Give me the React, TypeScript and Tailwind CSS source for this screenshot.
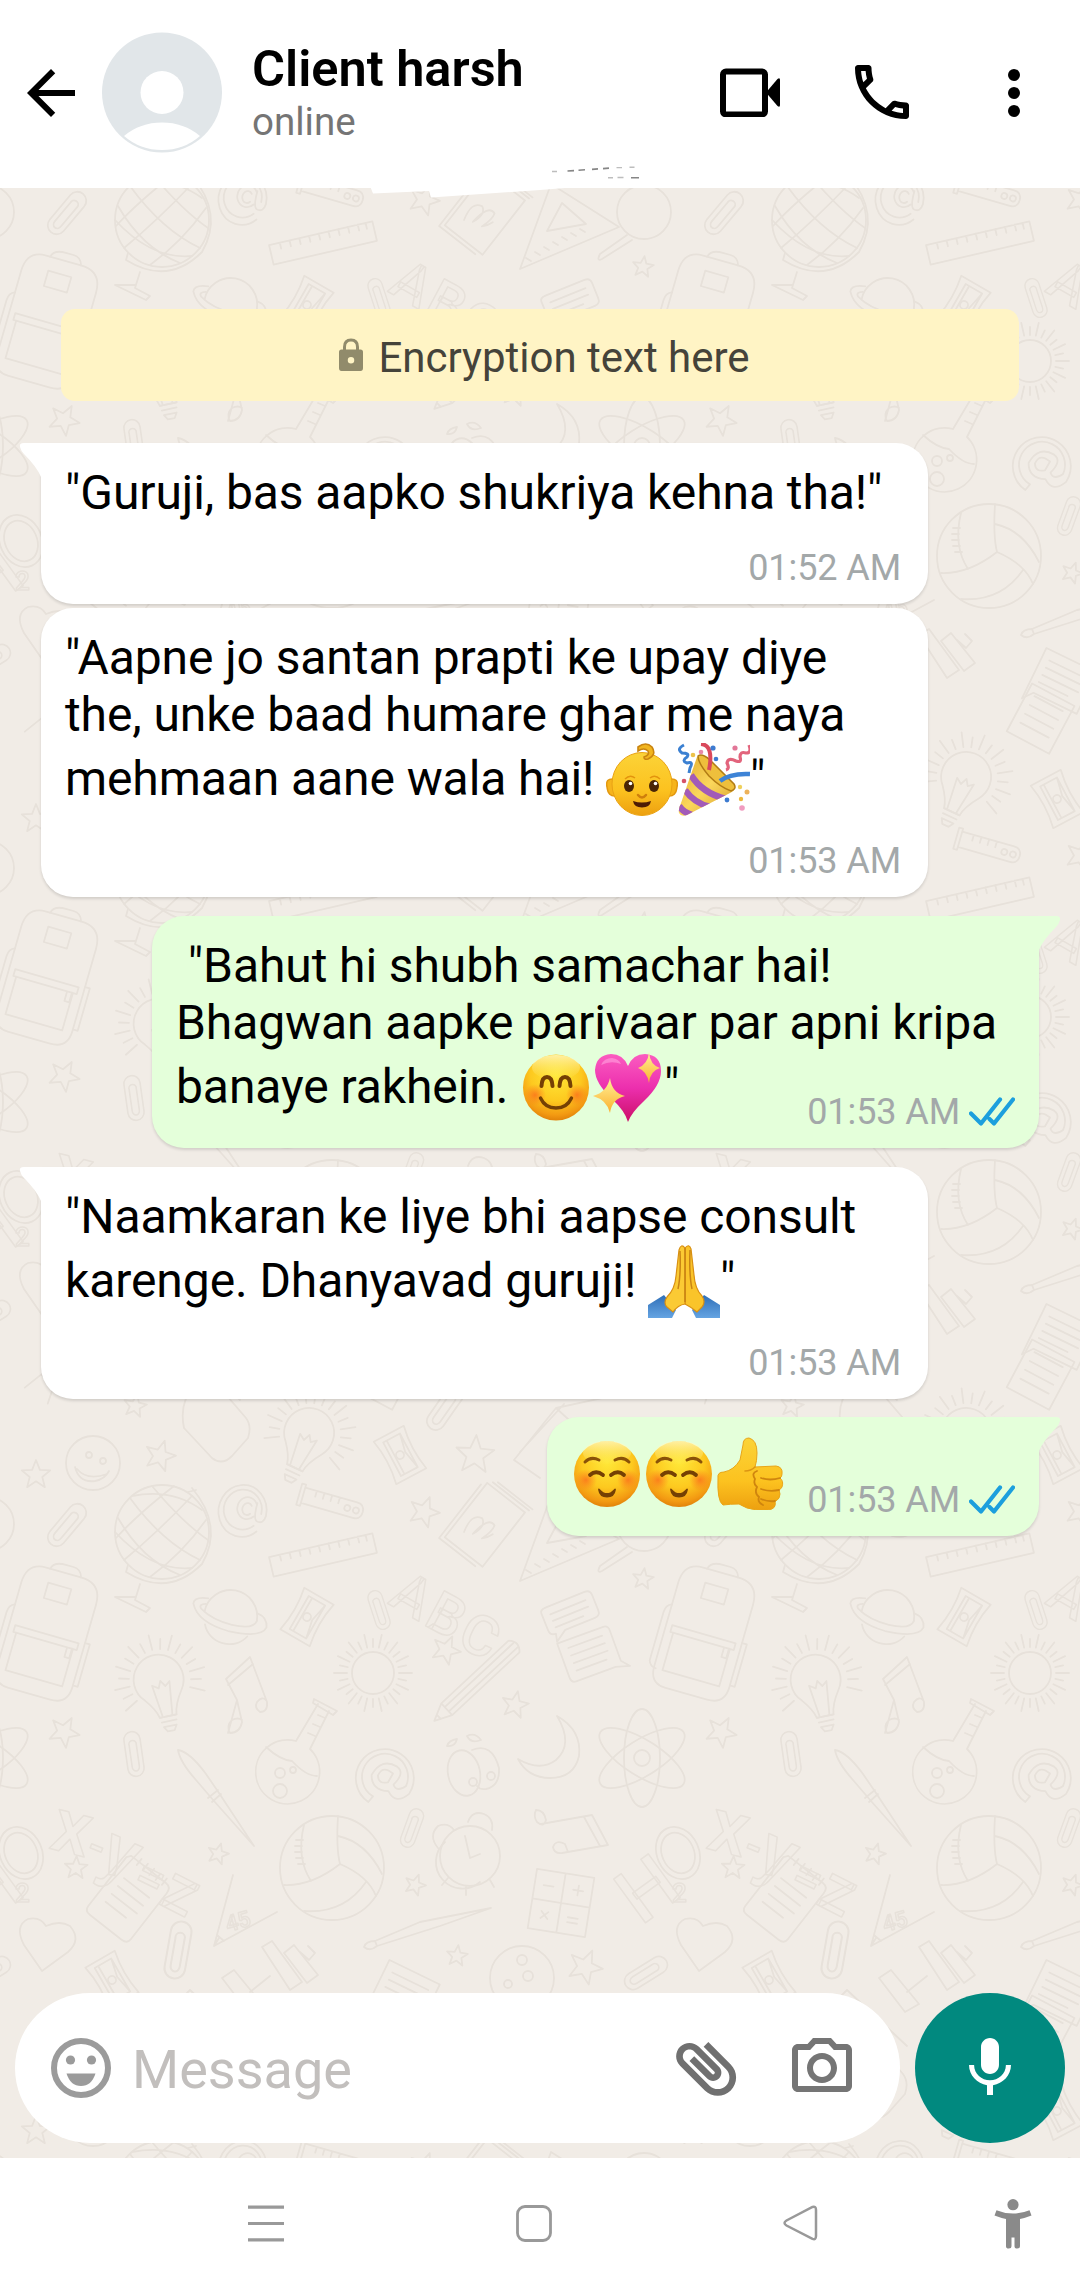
import React from "react";

/* ---------- Wallpaper ---------- */

const stars: [number, number, number][] = [
  [36, 75, 15], [160, 56, 16], [475, 55, 20], [424, 112, 16], [643, 179, 11], [446, 250, 15],
  [515, 305, 14], [64, 332, 16], [218, 454, 11], [76, 468, 12], [415, 485, 11], [457, 556, 11],
  [585, 567, 18], [135, 6, 12],
];

const STAR = "M0 -1L.26 -.34L.95 -.31L.42 .13L.59 .81L0 .42L-.59 .81L-.42 .13L-.95 -.31L-.26 -.34Z";

const clips: [number, number, number, number][] = [
  [67, 125, 40, 1], [379, 210, -18, 0.8], [134, 354, -8, 0.9], [412, 428, 20, 0.8],
  [178, 550, 10, 1.15], [445, 8, 35, 1], [646, 573, 58, 0.95],
];

function Rays({ r1, r2, n, from = 0, to = 360 }: { r1: number; r2: number; n: number; from?: number; to?: number }) {
  const rays = [];
  for (let i = 0; i < n; i++) {
    const a = ((from + ((to - from) * i) / n) * Math.PI) / 180;
    const end = i % 2 ? r2 - 5 : r2;
    rays.push(
      <path key={i} d={`M${(Math.cos(a) * r1).toFixed(1)} ${(Math.sin(a) * r1).toFixed(1)}L${(Math.cos(a) * end).toFixed(1)} ${(Math.sin(a) * end).toFixed(1)}`} />
    );
  }
  return <>{rays}</>;
}

function Bulb() {
  return (
    <>
      <path d="M-8 37Q-10 28 -19 17A25 25 0 1 1 19 14Q10 27 9 37Z" />
      <path d="M-5 36L-9 4L-3 8L0 1L4 7L9 3L5 36M-8 37h17M-7 42h15M-6 47h13l-3 5h-7z" />
      <Rays r1={31} r2={46} n={17} from={150} to={400} />
    </>
  );
}

function Sharpener() {
  return (
    <>
      <path d="M-17 -24H17Q12 0 17 24H-17Q-12 0 -17 -24Z" />
      <path d="M-9 -19H10V19H-9ZM-5 -19V19M10 -19L6 0L10 19" />
      <circle r="4" />
    </>
  );
}

function Tile() {
  return (
    <g id="doodles">
      {stars.map(([x, y, r], i) => (
        <path key={i} d={STAR} transform={`translate(${x} ${y}) rotate(${(i * 17) % 30}) scale(${r})`} vectorEffect="non-scaling-stroke" />
      ))}
      {clips.map(([x, y, a, s], i) => (
        <g key={i} transform={`translate(${x} ${y}) rotate(${a}) scale(${s})`}>
          <path d="M9 -12V16A9 9 0 0 1 -9 16V-16A9 9 0 0 1 9 -16V-10M4 -12V14A4 5 0 0 1 -4 14V-10A4 4 0 0 1 4 -12" />
        </g>
      ))}
      <g transform="translate(93 63)">
        <circle r="27" /><circle cx="-4" cy="-8" r="3" /><circle cx="10" cy="-2" r="3" />
        <path d="M-18 4Q-14 20 2 18Q12 16 16 8M-16 6Q-6 18 14 11" />
      </g>
      <path d="M188 -5Q180 8 184 28L212 58Q222 66 232 56L248 38Q252 26 246 18L222 -10" />
      <g transform="translate(310 34) rotate(25)"><Bulb /></g>
      <g transform="translate(160 280) rotate(-12)"><Bulb /></g>
      <g transform="translate(400 55) rotate(-28)"><Sharpener /></g>
      <g transform="translate(307 217) rotate(30)"><Sharpener /></g>
      <g transform="translate(112 580) rotate(-30)"><Sharpener /></g>
      <g transform="translate(162 132)">
        <circle r="47" />
        <path d="M-32 -34Q0 10 38 28M-44 -14Q-20 28 18 43M-10 -46Q20 -10 46 8M30 -36Q-4 0 -38 28M44 -12Q20 22 -12 45M12 -46Q-24 -18 -46 6M-47 0Q-10 40 30 36M-30 -36Q10 -44 40 -22" />
        <path d="M30 -44Q62 -6 40 32Q6 66 -36 40M26 -40L34 -42M-36 40L-34 33M-22 52L-27 68L-12 76L-16 80L-47 65L-27 65" />
      </g>
      <g transform="translate(247 109) rotate(12)">
        <path d="M14 20A24 26 0 1 1 20 3Q19 12 12 10Q8 8 9 -8M10 15A19 20 0 1 1 15 2M9 -6A10 11 0 1 0 8 6M4 -4A5 6 0 1 0 4 4" />
      </g>
      <g transform="translate(386 377) rotate(24)">
        <path d="M-6 30A29 29 0 1 1 28 6Q20 22 8 12Q-8 18 -14 4Q-12 -16 6 -14Q16 -12 10 4Q16 10 22 0A23 23 0 1 0 -4 23ZM5 -6Q-8 -10 -8 2Q-4 10 4 4Z" />
      </g>
      <g transform="translate(330 103) rotate(16)">
        <path d="M-32 -11V11M-28 -8H26Q34 -8 34 0T26 8H-28ZM-32 -11h4V11h-4M-16 -8v6M-8 -8v6M0 -8v6M8 -8v6" /><circle cx="18" r="3" /><circle cx="27" r="3" />
      </g>
      <g transform="translate(323 155) rotate(-13)">
        <path d="M-53 -10H53V10H-53ZM-42 -10v6M-32 -10v6M-22 -10v6M-12 -10v6M-2 -10v6M8 -10v6M18 -10v6M28 -10v6M38 -10v6M46 -10v6" />
      </g>
      <g transform="translate(483 124) rotate(38)">
        <path d="M-22 -35H26V34H-22ZM-26 -30V38H20M-18 -39H28M-14 -42H30M-10 18Q-16 -2 -4 -4Q4 0 -2 14Q0 -10 10 -6Q12 0 8 12Q12 8 14 2" />
      </g>
      <path d="M520 181L551 96L619 139ZM547 143L562 115L586 136ZM526 170l5 3M535 164l5 3M544 159l5 3M553 154l5 3M562 149l5 3M571 145l5 3M580 141l5 3" />
      <path d="M514 60L556 8L640 -10M514 60L540 78M520 52L564 4M556 8L580 30" />
      <circle cx="644" cy="124" r="27" />
      <path d="M627 147L600 166Q596 174 602 171L632 152" />
      <g transform="translate(46 234) rotate(16)">
        <path d="M-38 -42Q-38 -64 -18 -64H18Q40 -64 40 -42V44Q40 62 22 62H-22Q-38 62 -38 44Z" />
        <path d="M-14 -64Q-12 -72 0 -72H8Q16 -72 18 -64M-12 -50h24v16h-24zM-32 0H34V7H-32ZM-29 7V46H30V7M24 7v10h5v-10M-38 -20q-6 2 -6 10V40q2 6 8 6M40 -2h5V42h-5" />
      </g>
      <g transform="translate(230 217) rotate(16)">
        <path d="M-26 2A26 26 0 1 1 27 -3M-22 14A24 22 0 0 0 22 14M-26 -12Q-40 -10 -39 -3Q-30 14 2 14Q36 12 38 0Q36 -10 26 -11M-27 -6Q-34 -4 -30 0Q-16 8 4 7Q26 6 27 -4" />
      </g>
      <g fill="none" fontFamily="Roboto, sans-serif" fontWeight="500" strokeWidth="1.5">
        <text transform="translate(387 203) rotate(30)" fontSize="56">A</text>
        <text transform="translate(422 224) rotate(28)" fontSize="56">B</text>
        <text transform="translate(455 245) rotate(26)" fontSize="56">C</text>
        <text transform="translate(48 448) rotate(14)" fontSize="76">x</text>
        <text transform="translate(84 458) rotate(22)" fontSize="46">-</text>
        <text transform="translate(96 468) rotate(24)" fontSize="72">y</text>
        <text transform="translate(131 486) rotate(26)" fontSize="50">=</text>
        <text transform="translate(157 503) rotate(27)" fontSize="66">z</text>
        <text transform="translate(-16 526) rotate(-36)" fontSize="76">H</text>
        <text transform="translate(15 502)" fontSize="26">2</text>
        <text transform="translate(228 532) rotate(-16)" fontSize="22">45</text>
      </g>
      <g transform="translate(21 453) rotate(-24)"><ellipse rx="21" ry="27" /><ellipse rx="16" ry="21" /></g>
      <path d="M228 333L237 300L226 279L250 257L267 302Q268 312 260 312Q254 308 257 302Q262 296 266 300M228 285L253 264M237 300L242 322Q240 333 230 333Q226 326 232 320Q238 317 242 320" />
      <path d="M541 424L592 415L608 445L562 453Q554 454 553 447Q556 439 565 444L568 452M536 410Q544 410 546 420Q544 428 537 422Q533 416 536 410M584 417L600 446" />
      <g transform="translate(373 273)"><circle r="21" /><Rays r1={26} r2={39} n={28} /></g>
      <g transform="translate(476 282) rotate(47)">
        <path d="M-8 -52Q0 -60 8 -52V40L0 57L-8 40ZM-3 -54V40M3 -54V40M-8 40H8M-3 51H3" />
      </g>
      <g transform="translate(570 215) rotate(-22)">
        <path d="M-26 -12Q-26 -16 -20 -16H22Q28 -16 28 -10V6Q28 12 22 12H-10L-22 20L-20 12Q-26 12 -26 6ZM-18 -8H20M-18 -1H20M-18 6H12" />
      </g>
      <g transform="translate(590 255) rotate(-20)">
        <path d="M-27 -22H22Q27 -22 27 -16V16L34 24L20 20H-22Q-27 20 -27 14ZM-18 -14H18M-18 -6H18M-18 2H18M-18 10H14" />
      </g>
      <path d="M296 341A32 32 0 1 0 310 349L329 311M296 341L318 304M314 299L337 311L333 315L313 303ZM266 347Q280 360 292 361Q306 376 317 376M318 315l7 3M313 324l7 3M308 333l7 3" />
      <circle cx="280" cy="373" r="5" /><circle cx="280" cy="391" r="7" /><circle cx="293" cy="370" r="3" />
      <path d="M178 350Q190 352 206 374L219 393L254 446L214 401L196 380Q180 362 178 350ZM208 398L218 390M212 402L221 394" />
      <ellipse cx="464" cy="373" rx="16" ry="23" transform="rotate(-12 464 373)" />
      <path d="M472 350Q492 342 499 368Q500 386 486 389Q480 390 477 386M447 346q2 -6 10 -7q-2 8 -10 7M467 336q8 -4 14 4q-10 4 -14 -4" />
      <circle cx="473" cy="382" r="4" /><circle cx="491" cy="376" r="4" />
      <path d="M557 316Q582 330 579 356Q574 378 550 378Q528 378 518 359Q540 372 556 360Q574 344 557 316Z" />
      <g transform="translate(642 358)">
        <ellipse rx="18" ry="49" /><ellipse rx="18" ry="49" transform="rotate(58)" /><ellipse rx="18" ry="49" transform="rotate(-58)" /><circle r="8" />
      </g>
      <g transform="translate(128 499) rotate(38)">
        <path d="M-24 -36H20Q27 -36 27 -28V30Q27 36 20 36H-20Q-27 36 -27 30V-32ZM-16 -14H16M-16 -4H16M-16 6H16M-16 16H10M-14 -40v8M-6 -40v8M2 -40v8M10 -40v8M18 -40v8" />
      </g>
      <path d="M233 475L214 546L277 512M214 546L219 538M217 535L224 541" />
      <g transform="translate(332 468)">
        <circle r="52" />
        <path d="M6 -52Q4 -20 8 -4Q-20 18 -48 17M8 -4Q36 8 44 28M6 -32Q34 -26 50 6M-28 -43Q-36 -10 -21 13M34 14Q12 46 -28 43M-36 -28h7M-37 -22h7M-37 -16h7M-36 -10h7M-34 -4h7" />
      </g>
      <g transform="translate(470 456)">
        <circle r="30" /><path d="M-25 -14A25 25 0 0 0 10 26M-5 -20L0 2L10 -2M-32 -8Q-42 -20 -32 -30Q-22 -34 -16 -26M-2 -34Q2 -46 14 -42Q24 -38 22 -26M-22 22l-6 7M20 24l4 7M-4 31v8" />
      </g>
      <g transform="translate(561 503) rotate(9)">
        <path d="M-29 -30H29V30H-29ZM0 -30V30M-29 0H29M-20 -15h10M10 -15h10M15 -20v10M-18 11l7 7M-11 11l-7 7M9 13h10M9 18h10" />
      </g>
      <path d="M364 547Q366 541 375 541L420 522L491 508L440 526L377 546Q370 552 364 547ZM375 541L377 546" />
      <path d="M42 571L24 545Q14 526 28 519Q40 516 46 526Q60 520 70 526Q82 540 68 552Z" />
      <path d="M262 547L272 541L302 582L290 590ZM284 553L294 545L318 575L307 583ZM300 552L309 560L315 553L308 546M222 578L234 570L262 604L248 612ZM250 592L270 576" />
      <g transform="translate(405 592) rotate(26)"><path d="M-28 -22H28V24H-20L-28 34ZM-20 -12H20M-20 -4H20M-20 4H20M-20 12H12" /></g>
      <g transform="translate(385 628) rotate(28)"><path d="M-24 -24H24V30H-24ZM-16 -14H16M-16 -4H16M-16 6H16M-16 16H16" /></g>
      <circle cx="522" cy="578" r="32" /><circle cx="522" cy="560" r="5" /><circle cx="528" cy="576" r="5" /><circle cx="508" cy="584" r="4" />
      <g transform="translate(50 632) rotate(35)"><path d="M-14 24L0 -24L14 24M-7 4H7" /></g>
      <path d="M180 600L240 656M190 590L250 646M180 600L190 590" />
    </g>
  );
}

function Wallpaper() {
  return (
    <svg className="absolute inset-0 h-full w-full" aria-hidden="true">
      <defs>
        <pattern id="wall" width="657" height="656" patternUnits="userSpaceOnUse" patternTransform="translate(0 -100)">
          <g fill="none" stroke="#e7e1da" strokeWidth="1.8" strokeLinecap="round" strokeLinejoin="round">
            <Tile />
            <use href="#doodles" x="657" />
            <use href="#doodles" x="-657" />
            <use href="#doodles" y="-656" />
            <use href="#doodles" y="656" />
          </g>
        </pattern>
      </defs>
      <rect width="100%" height="100%" fill="url(#wall)" />
    </svg>
  );
}

/* ---------- Emoji ---------- */

function EmojiDefs() {
  return (
    <svg className="absolute h-0 w-0" aria-hidden="true">
      <defs>
        <linearGradient id="skin" x1="0" y1="0" x2="0" y2="1">
          <stop offset="0" stopColor="#fbd338" /><stop offset=".6" stopColor="#fcc21f" /><stop offset="1" stopColor="#eda010" />
        </linearGradient>
        <radialGradient id="face" cx=".5" cy=".32" r=".7">
          <stop offset="0" stopColor="#ffe838" /><stop offset=".55" stopColor="#fdc91f" /><stop offset=".85" stopColor="#f39a12" /><stop offset="1" stopColor="#dd7d08" />
        </radialGradient>
        <linearGradient id="gloss" x1="0" y1="0" x2="0" y2="1">
          <stop offset="0" stopColor="#fffbd0" stopOpacity=".75" /><stop offset="1" stopColor="#fff27a" stopOpacity="0" />
        </linearGradient>
        <radialGradient id="blush"><stop offset="0" stopColor="#fb6f1c" stopOpacity=".8" /><stop offset="1" stopColor="#fb7a1c" stopOpacity="0" /></radialGradient>
        <linearGradient id="pink" x1="0" y1="0" x2="0" y2="1">
          <stop offset="0" stopColor="#fb5cc0" /><stop offset=".5" stopColor="#ec2fae" /><stop offset="1" stopColor="#cb0f68" />
        </linearGradient>
        <linearGradient id="spark" x1="0" y1="0" x2="0" y2="1"><stop offset="0" stopColor="#fff29a" /><stop offset="1" stopColor="#fbb02c" /></linearGradient>
        <linearGradient id="cone" x1="0" y1="0" x2="1" y2="1"><stop offset="0" stopColor="#d99f20" /><stop offset=".5" stopColor="#fbd75c" /><stop offset="1" stopColor="#c98a18" /></linearGradient>
        <linearGradient id="sleeve" x1="0" y1="0" x2="0" y2="1"><stop offset="0" stopColor="#2f6fb8" /><stop offset="1" stopColor="#65a4e2" /></linearGradient>
        <clipPath id="coneClip"><path d="M1 70Q0 66 3 60L19 14Q24 10 30 16L56 42Q59 47 52 50L9 72Q3 74 1 70Z" /></clipPath>
      </defs>
    </svg>
  );
}

function Emoji({ children }: { children: React.ReactNode }) {
  return <svg viewBox="0 0 72 73" className="h-[73px] w-[72px] shrink-0">{children}</svg>;
}

const Baby = () => (
  <Emoji>
    <path d="M8 36Q-1 35 1 44Q2 54 10 53M64 36Q73 35 71 44Q70 54 62 53" fill="#f6b41c" stroke="#e3980f" strokeWidth="1.5" />
    <ellipse cx="36" cy="41" rx="30" ry="31.5" fill="url(#skin)" stroke="#eaa314" strokeWidth="1" />
    <path d="M32 4Q40 -2 46 4Q51 12 42 16Q38 17 38 14Q44 12 42 8Q38 4 32 8Z" fill="#f1b51f" stroke="#c98410" strokeWidth="1.6" />
    <path d="M19 36Q24 31 29 35M44 35Q49 31 54 36" fill="none" stroke="#e3940e" strokeWidth="1.5" />
    <ellipse cx="23" cy="43" rx="5" ry="6" fill="#4a2506" /><ellipse cx="48" cy="43" rx="5" ry="6" fill="#4a2506" />
    <circle cx="24.5" cy="40.5" r="1.8" fill="#fff" /><circle cx="49.5" cy="40.5" r="1.8" fill="#fff" />
    <path d="M32 52Q36 57 40 52" fill="none" stroke="#cf7f0c" strokeWidth="2.5" strokeLinecap="round" />
    <path d="M27 58Q36 61 45 58Q44 64.5 36 64.5T27 58Z" fill="#4d1c05" />
  </Emoji>
);

const Party = () => (
  <Emoji>
    <g clipPath="url(#coneClip)">
      <rect width="72" height="73" fill="url(#cone)" />
      <path d="M13 32Q24 50 48 56M7 47Q16 60 32 64M1 63Q6 70 14 72" fill="none" stroke="#a25bb8" strokeWidth="6.5" />
    </g>
    <path d="M20 13Q24 10 32 17L56 41Q59 46 53 48Q42 44 31 33Q20 20 20 13Z" fill="#eebf3c" stroke="#b27c14" strokeWidth="1.5" />
    <path d="M23 1Q36 2 31 27" fill="none" stroke="#d9495c" strokeWidth="4" />
    <path d="M42 38Q52 30 72 31" fill="none" stroke="#3d83d6" strokeWidth="4.5" />
    <path d="M6 2Q-2 6 4 10Q12 10 9 14Q3 18 9 20Q16 18 12 25L11 30" fill="none" stroke="#3b80d2" strokeWidth="3" />
    <path d="M71 2Q74 10 68 10Q62 8 62 14Q64 20 58 18Q50 14 49 20Q52 26 48 27" fill="none" stroke="#e2647c" strokeWidth="3.2" />
    <circle cx="35" cy="5" r="2.6" fill="#3d7bd0" /><circle cx="38" cy="16" r="2.3" fill="#3d7bd0" /><circle cx="57" cy="5" r="2.6" fill="#e27798" />
    <circle cx="15" cy="12" r="2.3" fill="#edc24a" /><circle cx="23" cy="9" r="2.3" fill="#e889a8" /><circle cx="6" cy="38" r="2.3" fill="#d65367" />
    <circle cx="62" cy="44" r="2.2" fill="#efd05c" /><circle cx="69" cy="49" r="2.5" fill="#edb25a" /><circle cx="63" cy="56" r="2.2" fill="#edb83c" />
    <circle cx="49" cy="57" r="2.4" fill="#3d7bd0" /><circle cx="64" cy="65" r="2.8" fill="#f09cc0" />
  </Emoji>
);

const Smile = () => (
  <Emoji>
    <circle cx="36" cy="36.5" r="33" fill="url(#face)" />
    <ellipse cx="36" cy="16.5" rx="24" ry="12.5" fill="url(#gloss)" />
    <circle cx="15" cy="44" r="11" fill="url(#blush)" /><circle cx="57" cy="44" r="11" fill="url(#blush)" />
    <path d="M21.5 35Q22 26 27 26T32.5 35M39.5 35Q40 26 45 26T50.5 35" fill="none" stroke="#754004" strokeWidth="4" strokeLinecap="round" />
    <path d="M20.5 47Q25 57 36 57T51.5 47" fill="none" stroke="#754004" strokeWidth="3.4" strokeLinecap="round" />
  </Emoji>
);

const Relaxed = () => (
  <Emoji>
    <circle cx="36" cy="37" r="33" fill="url(#face)" />
    <ellipse cx="36" cy="16" rx="24" ry="12" fill="url(#gloss)" />
    <circle cx="15" cy="43" r="11" fill="url(#blush)" /><circle cx="57" cy="43" r="11" fill="url(#blush)" />
    <path d="M14 25Q20 19 28 23M44 23Q52 19 58 25" fill="none" stroke="#8a5208" strokeWidth="3" strokeLinecap="round" />
    <path d="M19 38Q25 32.5 32 38M40 38Q47 32.5 53 38" fill="none" stroke="#754004" strokeWidth="3.8" strokeLinecap="round" />
    <path d="M28 52.5Q36 61.5 44 52.5Q43 59.5 36 59.5T28 52.5Z" fill="#754004" stroke="#754004" strokeWidth="1.8" strokeLinejoin="round" />
  </Emoji>
);

const SparkHeart = () => (
  <Emoji>
    <path d="M36 71Q33 60 20 48Q3 32 3 19Q4 4 19 3Q31 3 36 15Q41 3 53 3Q69 4 69 20Q69 34 52 50Q39 62 36 71Z" fill="url(#pink)" />
    <path d="M9 14Q12 7 20 7Q27 8 29 13Q19 9 9 14Z" fill="#ff9bdc" opacity=".65" />
    <path d="M57 1Q58 14 68 17Q58 20 57 32Q55 20 46 17Q56 13 57 1Z" fill="url(#spark)" />
    <path d="M18 27Q20 42 33 45Q20 48 18 62Q15 49 1 45Q15 41 18 27Z" fill="url(#spark)" />
  </Emoji>
);

const Pray = () => (
  <Emoji>
    <path d="M0 60L16 50L28 65L24 73H0ZM72 60L56 50L44 65L48 73H72Z" fill="url(#sleeve)" />
    <path d="M37 3Q41 -2 43 4L46 30Q47 44 54 51Q58 57 54 62L49 67Q43 62 37 59Z" fill="#fac42a" stroke="#d99012" strokeWidth="1.2" />
    <path d="M37 3Q33 -2 31 5L28 31Q27 44 19 52Q15 58 19 62L25 67Q30 60 37 59Z" fill="#fbca34" stroke="#d99012" strokeWidth="1.2" />
    <path d="M37 3V57M42 5Q41 30 44 44M32 6Q33 30 30 44" fill="none" stroke="#c98414" strokeWidth="1.5" />
  </Emoji>
);

const Thumb = () => (
  <Emoji>
    <path d="M3 41Q2 35 9 35Q19 33 25 23L28 8Q28 1 34 1Q42 3 42 16Q42 24 40 30L61 29Q68 30 67 37Q67 40 65 41Q69 44 67 50Q66 52 64 53Q66 57 64 61Q62 64 60 64Q62 72 53 73H42Q31 72 24 67Q15 67 8 68Q2 64 3 41Z" fill="url(#skin)" stroke="#e9a518" strokeWidth="1" />
    <path d="M65 41Q55 44 46 41M64 53Q55 55 46 52M60 64Q53 65 46 62M42 34Q36 36 40 42Q38 47 42 50Q39 56 44 60Q42 65 48 68" fill="none" stroke="#cf850e" strokeWidth="1.8" strokeLinecap="round" />
    <path d="M40 30Q36 34 30 34" fill="none" stroke="#dc9513" strokeWidth="1.6" strokeLinecap="round" />
  </Emoji>
);

/* ---------- Messages ---------- */

function Line({ children }: { children: React.ReactNode }) {
  return <div className="flex h-[57px] items-start leading-[57px] whitespace-pre">{children}</div>;
}

function EmojiLine({ before, after, children }: { before: string; after: string; children: React.ReactNode }) {
  return (
    <div className="flex h-[73px] items-start leading-[57px] whitespace-pre">
      <span className="mt-[6.5px]">{before}</span>
      {children}
      <span className="mt-[6.5px]">{after}</span>
    </div>
  );
}

function Ticks() {
  return (
    <svg viewBox="0 0 46 30" className="ml-[9px] h-[30px] w-[46px]" fill="none" stroke="#1c9fdd" strokeWidth="4.2">
      <path d="M2 16.500L12 26.500L31 2.500M20.500 22L25 26.500L44 2.500" strokeLinecap="round" strokeLinejoin="round" />
    </svg>
  );
}

function Bubble({ sent, tail, time, size, children }: { sent?: boolean; tail?: boolean; time: string; size: string; children: React.ReactNode }) {
  return (
    <div
      className={`relative grid ${size} rounded-[32px] text-[48px] tracking-[-0.09px] text-black shadow-[0_2px_3px_rgba(0,0,0,0.13)] ${
        sent ? "mr-[41px] self-end bg-[#e4ffda] pr-6 pl-6" : "ml-[41px] self-start bg-white pr-[27px] pl-6"
      } ${tail ? (sent ? "rounded-tr-none" : "rounded-tl-none") : ""}`}
    >
      {tail && (
        <svg
          viewBox="0 0 23 34"
          className={`absolute top-0 h-[34px] w-[23px] ${sent ? "-right-[22px] -scale-x-100 fill-[#e4ffda]" : "-left-[22px] fill-white"}`}
        >
          <path d="M23 0H5Q0 0 1 4Q2 8 5 11Q18 24 22 34H23Z" />
        </svg>
      )}
      <div className="[grid-area:1/1]">{children}</div>
      <div className="mb-[15px] flex items-center self-end justify-self-end text-[36px] leading-[42px] text-[#a3a8a9] [grid-area:1/1]">
        {time}
        {sent && <Ticks />}
      </div>
    </div>
  );
}

/* ---------- Screen ---------- */

function Header() {
  return (
    <header className="relative z-10 flex h-[188px] items-start bg-white">
      <svg viewBox="0 0 24 24" className="mt-[57px] ml-[15px] size-[72px] fill-black">
        <path d="M20 11H7.830l5.590-5.590L12 4l-8 8 8 8 1.410-1.410L7.830 13H20v-2z" />
      </svg>
      <svg viewBox="0 0 120 121" className="mt-8 ml-[15px] h-[121px] w-[120px]">
        <circle cx="60" cy="60.5" r="60" fill="#e1e6e9" />
        <circle cx="60" cy="60.5" r="21.5" fill="#fff" />
        <path d="M22 104Q38 90.5 60 90.5T98 104Q82 118 60 118T22 104Z" fill="#fff" />
      </svg>
      <div className="mt-[39px] ml-[30px] flex-1">
        <h1 className="text-[50.5px] leading-[60px] font-semibold text-black">Client harsh</h1>
        <p className="text-[38.5px] leading-[45px] text-[#757575]">online</p>
      </div>
      <svg viewBox="0 0 60 49" className="mt-[68px] mr-[75px] h-[49px] w-[60px]">
        <rect x="3" y="3.4" width="42" height="43" rx="3" fill="none" stroke="#000" strokeWidth="6" />
        <path d="M46 24.5L57.5 11Q60 9 60 12V37Q60 40 57.5 38Z" fill="#000" />
      </svg>
      <svg viewBox="0 0 24 24" className="mt-[56px] mr-[60px] -ml-[9px] size-[72px] fill-black">
        <path d="M6.540 5c.06.890.21 1.760.45 2.590l-1.200 1.200c-.41-1.200-.67-2.470-.76-3.790h1.510m9.860 12.020c.85.240 1.720.390 2.600.450v1.490c-1.320-.09-2.590-.35-3.800-.75l1.200-1.190M7.500 3H4c-.55 0-1 .45-1 1 0 9.390 7.610 17 17 17 .55 0 1-.45 1-1v-3.490c0-.55-.45-1-1-1-1.240 0-2.450-.2-3.570-.57-.1-.04-.21-.05-.31-.05-.26 0-.51.1-.71.290l-2.200 2.200c-2.830-1.450-5.150-3.760-6.590-6.590l2.200-2.200c.28-.28.36-.67.25-1.020C8.700 6.450 8.500 5.250 8.500 4c0-.55-.45-1-1-1z" />
      </svg>
      <svg viewBox="0 0 24 24" className="mt-[57px] mr-[30px] size-[72px] fill-black">
        <circle cx="12" cy="6" r="2" /><circle cx="12" cy="12" r="2" /><circle cx="12" cy="18" r="2" />
      </svg>
      <svg viewBox="0 0 300 34" className="absolute top-[166px] left-[370px] h-[34px] w-[300px]">
        <path d="M0 20L3 27.500L59 25L61 31.500L170 24L220 20Z" fill="#fff" />
        <path d="M197.500 5l6.500 -.4M208.500 4.200l6.500 -.4M222 3.400l6 -.5M233 2.600l6 -.5M261 11.700h8" stroke="#868686" strokeWidth="1.6" />
        <path d="M182 5.500h5M246.500 1.600h5.500M259.500 1.300h5M238 11.700h5M247.500 11.500h6" stroke="#bdbdbd" strokeWidth="1.4" />
      </svg>
    </header>
  );
}

function Composer() {
  return (
    <div className="mt-auto mb-[15px] flex items-center pr-[15px] pl-[15px]">
      <div className="flex h-[150px] flex-1 items-center rounded-[75px] bg-white">
        <svg viewBox="0 0 60 62" className="ml-[36px] h-[62px] w-[60px]">
          <circle cx="30" cy="31" r="27" fill="none" stroke="#9b9b9b" strokeWidth="6" />
          <circle cx="19.5" cy="23" r="4.6" fill="#9b9b9b" /><circle cx="40.5" cy="23" r="4.6" fill="#9b9b9b" />
          <path d="M15.500 36.500H44.500Q40.500 49 30 49T15.500 36.500Z" fill="#9b9b9b" />
        </svg>
        <span className="mt-1 ml-[21px] flex-1 text-[54px] leading-[62px] text-[#c2bfbd]">Message</span>
        <svg viewBox="0 0 24 24" className="-mx-1 size-20 rotate-[225deg] fill-[#707070]">
          <path d="M2 12.500C2 9.460 4.460 7 7.500 7H18c2.210 0 4 1.790 4 4s-1.790 4-4 4H9.500C8.120 15 7 13.880 7 12.500S8.120 10 9.500 10H17v2H9.410c-.55 0-.55 1 0 1H18c1.100 0 2-.9 2-2s-.9-2-2-2H7.500C5.570 9 4 10.570 4 12.500S5.570 16 7.500 16H17v2H7.500C4.460 18 2 15.540 2 12.500z" />
        </svg>
        <svg viewBox="0 0 24 24" className="mr-[42px] ml-[44px] size-[72px] fill-[#757575]">
          <path d="M14.120 4l1.830 2H20v12H4V6h4.050l1.830-2h4.240M15 2H9L7.170 4H4c-1.100 0-2 .9-2 2v12c0 1.100.9 2 2 2h16c1.100 0 2-.9 2-2V6c0-1.100-.9-2-2-2h-3.170L15 2zm-3 7c1.650 0 3 1.350 3 3s-1.350 3-3 3-3-1.350-3-3 1.350-3 3-3m0-2c-2.760 0-5 2.240-5 5s2.240 5 5 5 5-2.240 5-5-2.240-5-5-5z" />
        </svg>
      </div>
      <div className="ml-[15px] flex size-[150px] items-center justify-center rounded-full bg-[#01897f]">
        <svg viewBox="0 0 24 24" className="size-[72px] fill-white">
          <path d="M12 14c1.660 0 2.990-1.340 2.990-3L15 5c0-1.660-1.340-3-3-3S9 3.340 9 5v6c0 1.660 1.340 3 3 3zm5.300-3c0 3-2.540 5.100-5.300 5.100S6.700 14 6.700 11H5c0 3.410 2.720 6.230 6 6.720V21h2v-3.280c3.280-.48 6-3.300 6-6.720h-1.700z" />
        </svg>
      </div>
    </div>
  );
}

function NavBar() {
  return (
    <nav className="flex h-[132px] items-start bg-white">
      <svg viewBox="0 0 36 37" className="mt-[47px] ml-[248px] h-[37px] w-9" stroke="#999" strokeWidth="3.2">
        <path d="M0 2.200H36M0 18.500H36M0 34.800H36" />
      </svg>
      <svg viewBox="0 0 36 37" className="mt-[47px] ml-[232px] h-[37px] w-9">
        <rect x="1.5" y="1.5" width="33" height="34" rx="7.5" fill="none" stroke="#999" strokeWidth="2.8" />
      </svg>
      <svg viewBox="0 0 35 36" className="mt-[47px] ml-[231px] h-9 w-[35px]">
        <path d="M29.500 2Q33 .8 33 5V31Q33 35.200 29.500 33.800L3.500 20.500Q-.5 18 3.500 15.500Z" fill="none" stroke="#999" strokeWidth="2.5" />
      </svg>
      <svg viewBox="0 0 38 50" className="mt-[41px] ml-[176px] h-[50px] w-[38px]" fill="#8a8a8a">
        <circle cx="19" cy="5.7" r="5.6" />
        <path d="M2.500 11.200Q19 18 35.500 11.200L37.500 16.500Q31 19 26 20V47Q26 49.500 23.200 49.500T20.500 47V38.500H17.500V47Q17.500 49.500 14.700 49.500T12 47V20Q7 19 .5 16.500Z" />
      </svg>
    </nav>
  );
}

export default function App() {
  return (
    <div className="flex h-[2290px] w-[1080px] flex-col overflow-hidden bg-white font-['Roboto',sans-serif]">
      <EmojiDefs />
      <Header />
      <main className="relative flex flex-1 flex-col bg-[#f1ece6]">
        <Wallpaper />
        <div className="relative flex flex-1 flex-col">
          <div className="mx-[61px] mt-[121px] flex h-[92px] items-center justify-center rounded-[14px] bg-[#fff4c5] pt-1 pl-[9px] text-[42px] text-[#45433a]">
            <svg viewBox="0 0 24 33" className="-mt-[6px] mr-[15px] h-[33px] w-6">
              <path d="M5.500 14V9Q5.500 2 12 2T18.500 9V14" fill="none" stroke="#918b6b" strokeWidth="3" />
              <path d="M2.500 11.500H21.500Q24 11.500 24 14V30Q24 33 21.500 33H2.500Q0 33 0 30V14Q0 11.500 2.500 11.500ZM12 19A3 3 0 1 0 12 25.500A3 3 0 1 0 12 19Z" fill="#918b6b" fillRule="evenodd" />
            </svg>
            Encryption text here
          </div>

          <Bubble tail time="01:52 AM" size="mt-[42px] h-[161px] w-[887px] pt-[21px]">
            <Line>"Guruji, bas aapko shukriya kehna tha!"</Line>
          </Bubble>

          <Bubble time="01:53 AM" size="mt-1 h-[289px] w-[887px] pt-[21px]">
            <Line>"Aapne jo santan prapti ke upay diye</Line>
            <Line>the, unke baad humare ghar me naya</Line>
            <EmojiLine before="mehmaan aane wala hai! " after={'"'}>
              <Baby />
              <Party />
            </EmojiLine>
          </Bubble>

          <Bubble sent tail time="01:53 AM" size="mt-[19px] h-[232px] w-[887px] pt-[21px]">
            <Line>{' "Bahut hi shubh samachar hai!'}</Line>
            <Line>Bhagwan aapke parivaar par apni kripa</Line>
            <EmojiLine before="banaye rakhein. " after={'"'}>
              <Smile />
              <SparkHeart />
            </EmojiLine>
          </Bubble>

          <Bubble tail time="01:53 AM" size="mt-[19px] h-[232px] w-[887px] pt-[21px]">
            <Line>"Naamkaran ke liye bhi aapse consult</Line>
            <EmojiLine before="karenge. Dhanyavad guruji! " after={'"'}>
              <Pray />
            </EmojiLine>
          </Bubble>

          <Bubble sent tail time="01:53 AM" size="mt-[18px] h-[119px] w-[492px] pt-5">
            <div className="flex">
              <Relaxed />
              <Relaxed />
              <Thumb />
            </div>
          </Bubble>

          <Composer />
        </div>
      </main>
      <NavBar />
    </div>
  );
}
